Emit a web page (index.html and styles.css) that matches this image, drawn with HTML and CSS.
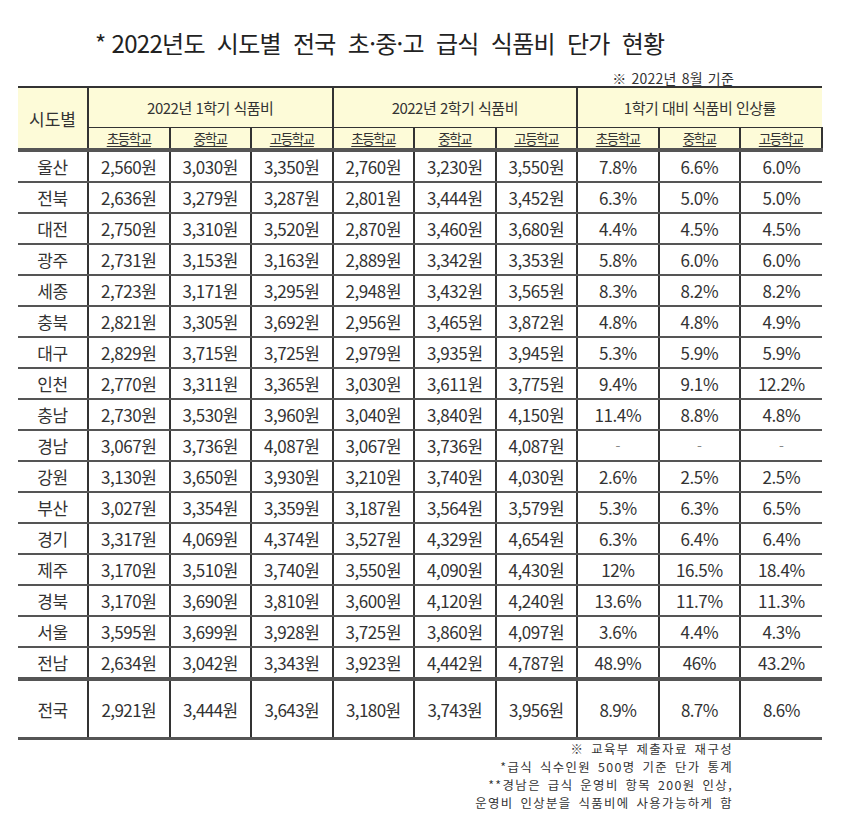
FILE: index.html
```html
<!DOCTYPE html>
<html lang="ko">
<head>
<meta charset="utf-8">
<title>2022년도 시도별 전국 초·중·고 급식 식품비 단가 현황</title>
<link rel="stylesheet" href="styles.css">
</head>
<body>
<div class="page">
  <h1 class="title">* 2022년도&nbsp; 시도별&nbsp; 전국&nbsp; 초·중·고&nbsp; 급식&nbsp; 식품비&nbsp; 단가&nbsp; 현황</h1>
  <div class="basis">※ 2022년 8월 기준</div>
  <table class="grid">
    <colgroup>
      <col class="c-region">
      <col><col><col><col><col><col><col><col><col>
    </colgroup>
    <thead>
      <tr class="h1">
        <th rowspan="2" class="region-h">시도별</th>
        <th colspan="3" class="group">2022년 1학기 식품비</th>
        <th colspan="3" class="group">2022년 2학기 식품비</th>
        <th colspan="3" class="group last">1학기 대비 식품비 인상률</th>
      </tr>
      <tr class="h2">
        <th>초등학교</th><th>중학교</th><th>고등학교</th>
        <th>초등학교</th><th>중학교</th><th>고등학교</th>
        <th>초등학교</th><th>중학교</th><th class="end">고등학교</th>
      </tr>
    </thead>
    <tbody>
      <tr><td>울산</td><td>2,560원</td><td>3,030원</td><td>3,350원</td><td>2,760원</td><td>3,230원</td><td>3,550원</td><td>7.8%</td><td>6.6%</td><td>6.0%</td></tr>
      <tr><td>전북</td><td>2,636원</td><td>3,279원</td><td>3,287원</td><td>2,801원</td><td>3,444원</td><td>3,452원</td><td>6.3%</td><td>5.0%</td><td>5.0%</td></tr>
      <tr><td>대전</td><td>2,750원</td><td>3,310원</td><td>3,520원</td><td>2,870원</td><td>3,460원</td><td>3,680원</td><td>4.4%</td><td>4.5%</td><td>4.5%</td></tr>
      <tr><td>광주</td><td>2,731원</td><td>3,153원</td><td>3,163원</td><td>2,889원</td><td>3,342원</td><td>3,353원</td><td>5.8%</td><td>6.0%</td><td>6.0%</td></tr>
      <tr><td>세종</td><td>2,723원</td><td>3,171원</td><td>3,295원</td><td>2,948원</td><td>3,432원</td><td>3,565원</td><td>8.3%</td><td>8.2%</td><td>8.2%</td></tr>
      <tr><td>충북</td><td>2,821원</td><td>3,305원</td><td>3,692원</td><td>2,956원</td><td>3,465원</td><td>3,872원</td><td>4.8%</td><td>4.8%</td><td>4.9%</td></tr>
      <tr><td>대구</td><td>2,829원</td><td>3,715원</td><td>3,725원</td><td>2,979원</td><td>3,935원</td><td>3,945원</td><td>5.3%</td><td>5.9%</td><td>5.9%</td></tr>
      <tr><td>인천</td><td>2,770원</td><td>3,311원</td><td>3,365원</td><td>3,030원</td><td>3,611원</td><td>3,775원</td><td>9.4%</td><td>9.1%</td><td>12.2%</td></tr>
      <tr><td>충남</td><td>2,730원</td><td>3,530원</td><td>3,960원</td><td>3,040원</td><td>3,840원</td><td>4,150원</td><td>11.4%</td><td>8.8%</td><td>4.8%</td></tr>
      <tr><td>경남</td><td>3,067원</td><td>3,736원</td><td>4,087원</td><td>3,067원</td><td>3,736원</td><td>4,087원</td><td class="dash">-</td><td class="dash">-</td><td class="dash">-</td></tr>
      <tr><td>강원</td><td>3,130원</td><td>3,650원</td><td>3,930원</td><td>3,210원</td><td>3,740원</td><td>4,030원</td><td>2.6%</td><td>2.5%</td><td>2.5%</td></tr>
      <tr><td>부산</td><td>3,027원</td><td>3,354원</td><td>3,359원</td><td>3,187원</td><td>3,564원</td><td>3,579원</td><td>5.3%</td><td>6.3%</td><td>6.5%</td></tr>
      <tr><td>경기</td><td>3,317원</td><td>4,069원</td><td>4,374원</td><td>3,527원</td><td>4,329원</td><td>4,654원</td><td>6.3%</td><td>6.4%</td><td>6.4%</td></tr>
      <tr><td>제주</td><td>3,170원</td><td>3,510원</td><td>3,740원</td><td>3,550원</td><td>4,090원</td><td>4,430원</td><td>12%</td><td>16.5%</td><td>18.4%</td></tr>
      <tr><td>경북</td><td>3,170원</td><td>3,690원</td><td>3,810원</td><td>3,600원</td><td>4,120원</td><td>4,240원</td><td>13.6%</td><td>11.7%</td><td>11.3%</td></tr>
      <tr><td>서울</td><td>3,595원</td><td>3,699원</td><td>3,928원</td><td>3,725원</td><td>3,860원</td><td>4,097원</td><td>3.6%</td><td>4.4%</td><td>4.3%</td></tr>
      <tr><td>전남</td><td>2,634원</td><td>3,042원</td><td>3,343원</td><td>3,923원</td><td>4,442원</td><td>4,787원</td><td>48.9%</td><td>46%</td><td>43.2%</td></tr>
    </tbody>
    <tfoot>
      <tr class="total"><td>전국</td><td>2,921원</td><td>3,444원</td><td>3,643원</td><td>3,180원</td><td>3,743원</td><td>3,956원</td><td>8.9%</td><td>8.7%</td><td>8.6%</td></tr>
    </tfoot>
  </table>
  <div class="notes">
    <p>※ 교육부 제출자료 재구성</p>
    <p>*급식 식수인원 500명 기준 단가 통계</p>
    <p>**경남은 급식 운영비 항목 200원 인상,</p>
    <p>운영비 인상분을 식품비에 사용가능하게 함</p>
  </div>
</div>
</body>
</html>
```

FILE: styles.css
```css
html, body {
  margin: 0;
  padding: 0;
  background: #ffffff;
}

body {
  font-family: "Noto Sans CJK KR", "Noto Sans", sans-serif;
  color: #333;
}

.page {
  width: 857px;
  padding-top: 28px;
}

.title {
  margin: 0 0 12px 95px;
  font-size: 24px;
  line-height: 30px;
  font-weight: 400;
  color: #222;
  letter-spacing: -0.7px;
  white-space: nowrap;
}

.basis {
  display: flex;
  justify-content: flex-end;
  padding-right: 123px;
  font-size: 14px;
  line-height: 16px;
  letter-spacing: 0.2px;
  word-spacing: 1px;
  color: #333;
}

.grid {
  margin-left: 18px;
  width: 804px;
  table-layout: fixed;
  border-collapse: collapse;
  border-top: 2px solid #333;
}

.grid col { width: 81.5px; }
.grid col.c-region { width: 70px; }

.grid th,
.grid td {
  padding: 0;
  text-align: center;
  vertical-align: middle;
  white-space: nowrap;
}

.grid thead th {
  background: #fdfbd8;
  font-weight: 400;
  color: #333;
}

.h1 th {
  height: 39px;
  font-size: 15px;
  letter-spacing: -0.5px;
  border-left: 2px solid #333;
  border-bottom: 1.5px solid #333;
}

.h1 th.region-h {
  border-left: none;
  font-size: 17px;
  letter-spacing: 0;
  border-bottom: 4px solid #555;
}

.h2 th {
  height: 19px;
  font-size: 13.5px;
  letter-spacing: -1.4px;
  text-decoration: underline;
  text-underline-offset: 2px;
  border-left: 2px solid #333;
  border-bottom: 4px solid #555;
}

.h2 th.end { border-right: 2px solid #333; }

.grid tbody td {
  height: 29px;
  font-size: 17px;
  letter-spacing: -0.4px;
  border-left: 2px solid #333;
  border-bottom: 2px solid #555;
}

.grid td:first-child { border-left: none; }

.grid tbody tr:last-child td { border-bottom: 4px solid #555; }

.grid td.dash { color: #888; font-size: 14px; }

.total td {
  height: 56px;
  font-size: 17px;
  letter-spacing: -0.6px;
  border-left: 2px solid #333;
  border-bottom: 3px solid #555;
}

.notes {
  display: flex;
  flex-direction: column;
  align-items: flex-end;
  padding-right: 124px;
  padding-top: 0;
}

.notes p {
  margin: 0;
  font-size: 12.4px;
  line-height: 18px;
  letter-spacing: 1.4px;
  word-spacing: 2px;
  color: #333;
}
```
